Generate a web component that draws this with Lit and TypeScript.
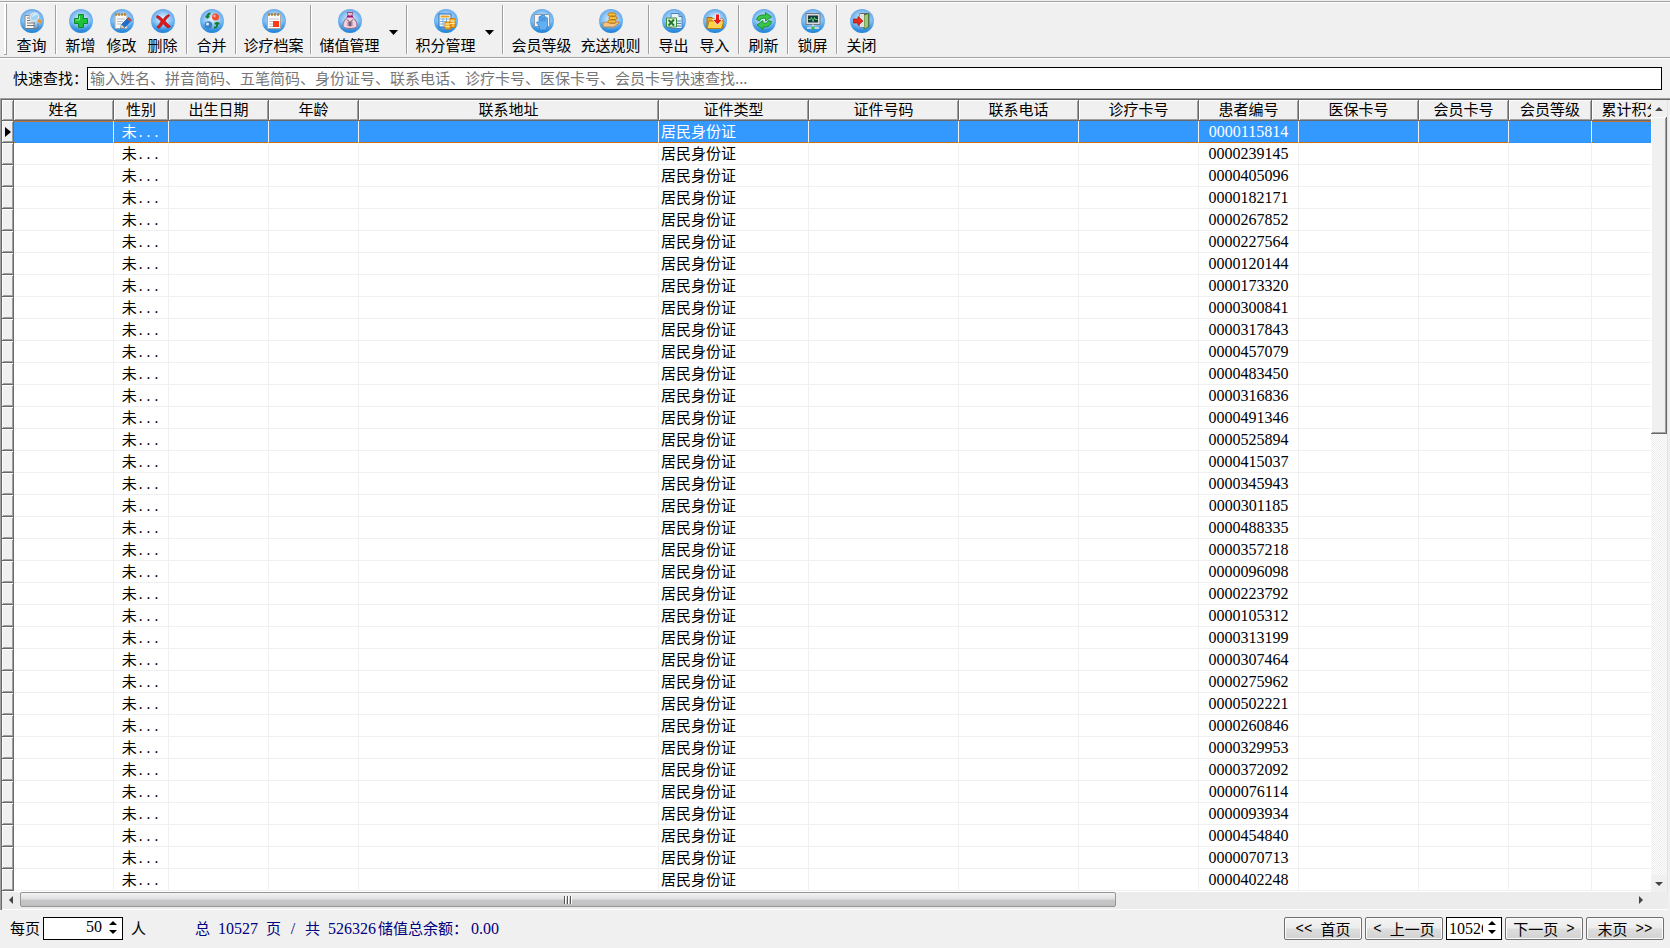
import { LitElement, html, css, svg } from "lit";
import { customElement, property, state } from "lit/decorators.js";

const icons: Record<string, unknown> = {
  query: svg`<path d="M5 6.500h9v13h-9z" fill="#f4f4f4" stroke="#8a8a8a"/><path d="M5.500 19.500h12.500v-5" stroke="#777" fill="none"/><path d="M7 9h4M7 11.500h3M7 14h8M7 16.500h8" stroke="#777"/><circle cx="14.500" cy="8" r="4.400" fill="#9fd4f7" stroke="#dfe9f2" stroke-width="1.600"/><circle cx="14.500" cy="8" r="5.200" fill="none" stroke="#7d9fc0" stroke-width=".5"/><path d="M12.500 7.500q1-2.500 3.500-2" stroke="#fff" fill="none"/><path d="M18 11l3.500 2.500" stroke="#e39a2c" stroke-width="2.800"/>`,
  add: svg`<path d="M9.500 5.500h5v4h4v5h-4v4h-5v-4h-4v-5h4z" fill="#1fc03a" stroke="#0c8a2a"/><path d="M10.500 7v4h-4" stroke="#7ff090" fill="none"/>`,
  edit: svg`<path d="M5 5.500h12v14H5z" fill="#fafafa" stroke="#a8a8a8"/><path d="M6 4v3M9 4v3M12 4v3M15 4v3" stroke="#b5802a" stroke-width="1.500"/><path d="M7 10h8M7 12.500h6M7 15h4" stroke="#b8bcc4"/><path d="M18.500 8.500l3 2.500-7 7.500-4 1 1-4z" fill="#1d6fd0" stroke="#0f4a96" stroke-width=".7"/><path d="M11.500 15.500l3 3-4 1z" fill="#f5cf9a"/><path d="M18.500 8.500l3 2.500-1.500 1.500-3-2.500z" fill="#e04a2a"/>`,
  remove: svg`<path d="M6 6.500q3 .5 6 4 2.500-4 6-5l.5 1.500q-2.500 1.500-4.500 5 2 2.500 5.500 5.500l-2.500 1.500q-3-2-5-4.500-1.500 3-4 5l-2-1.500q2.500-2.500 4-5.500-2-3-4.500-4z" fill="#e01818" stroke="#a80f1e" stroke-width=".7"/>`,
  merge: svg`<circle cx="15.500" cy="8" r="3.500" fill="#f2502e"/><circle cx="14.500" cy="7" r="1.200" fill="#ffb09c"/><circle cx="8.500" cy="16" r="3.800" fill="#3f7fc4"/><circle cx="7.500" cy="15" r="1.500" fill="#d8ecff"/><path d="M10.500 4.500q-3 0-3 3v2M5.500 7.500h4M14 18.500q3 .5 3-2.500v-3M14.500 14.500h5" fill="none" stroke="#0e7a2c" stroke-width="1.800"/>`,
  record: svg`<path d="M5.500 5.500h13v14h-13z" fill="#fdfdfd" stroke="#b0a8a0"/><path d="M7 4v3M10 4v3M13 4v3M16 4v3" stroke="#a87c34" stroke-width="1.500"/><path d="M7 10h10M7 12.500h4M7 15h4M7 17.500h4" stroke="#c4c4cc"/><path d="M11 12h6v6h-6z" fill="#ff3a12"/>`,
  bag: svg`<path d="M9 3.500l6 0-1.500 3.500q6 5 5.500 10.500-.5 2-7 2t-7-2q-.5-5.500 5.500-10.500z" fill="#f0cfe0" stroke="#8f6b82"/><path d="M9 4l2-1 1.500 1 2-1" stroke="#b04080" fill="none"/><path d="M9 7.500h6" stroke="#a01470" stroke-width="2"/><path d="M9 10.500l3 3 3-3M12 13.500v4M9.500 14h5M9.500 16h5" stroke="#5a3a55" fill="none"/>`,
  points: svg`<path d="M5 5h12v13H5z" fill="#fff" stroke="#1a68b8"/><path d="M6.500 7.500h9" stroke="#f0a020" stroke-width="2"/><path d="M6 10h10M6 12.500h6M6 15h6M9 9v8M12.500 9v4" stroke="#7ab0dc"/><path d="M11 13h6v7h-6zM16 9.500h5v9h-5z" fill="#f7b733" stroke="#c97a10"/><path d="M11 15h5M11 17.500h5M16 12h5M16 14.500h5" stroke="#ffe79a"/>`,
  hand: svg`<path d="M4.500 5.500h15v12h-15z" fill="#f2f6fa" stroke="#909aa6"/><path d="M9.500 21v-3L6.500 13.500q.5-1.500 2.500 0V8q1-1.500 2 0V6.500q1-1.500 2 0V7q1.200-1.500 2 0v2q1.200-1.500 2.500 0v8l-1.500 4z" fill="#62b0f2" stroke="#2f86d8" stroke-width=".8"/><path d="M11 8v4.500M13 8v4.500M15 8.500v4" stroke="#2676c8" stroke-width=".7"/>`,
  coins: svg`<path d="M4 14q4-2 7 0l3 .5q2 0 5-2 1.500 0 1 1.500l-5 4H4z" fill="#f3c48a" stroke="#b87830" stroke-width=".8"/><rect x="9" y="4" width="8" height="3" rx="1.500" fill="#f8bf3c" stroke="#b77a16"/><rect x="10" y="7.500" width="8" height="3" rx="1.500" fill="#f8bf3c" stroke="#b77a16"/><rect x="9" y="11" width="8" height="3" rx="1.500" fill="#f8bf3c" stroke="#b77a16"/>`,
  excel: svg`<path d="M9 4.500h8l3 3v12H9z" fill="#e8f2fb" stroke="#4a80b8"/><path d="M17 4.500v3h3M15 12h4M15 14.500h4M15 17h4" stroke="#4a80b8" fill="none"/><path d="M4.500 9h10v9h-10z" fill="#e6f4dd" stroke="#3f8a3c"/><path d="M6.500 11l5.500 5.500M12 10.500l-5.500 6" stroke="#1f7a2c" stroke-width="2"/>`,
  import: svg`<path d="M4 8.500h5l1.500 1.500H20v9H4z" fill="#e8a21c" stroke="#a86c0c"/><path d="M6 12h15l-2.500 7.500H4z" fill="#fcd24c" stroke="#b87f10"/><path d="M12.500 5h4v5.500h3l-5 5.500-5-5.500h3z" fill="#e81818" stroke="#fff" stroke-width=".8"/>`,
  refresh: svg`<path d="M4.500 10.500Q6 5 13.500 6V3.500L19.500 8l-6 4V9.500Q9 8.500 7.500 12z" fill="#39c545" stroke="#0f8526" stroke-width=".8"/><path d="M19.500 12.500Q18.500 18.500 11 18v2.500L5 16l6-4.500V14q4 1 5.500-2.500z" fill="#39c545" stroke="#0f8526" stroke-width=".8"/>`,
  lock: svg`<path d="M5 4.500h14v11H5z" fill="#d8dcde" stroke="#75797d"/><path d="M7 6.500h10v7H7z" fill="#173c40"/><path d="M7.500 10.500h2l1-2 1.500 4 1.500-4 1 2h2" stroke="#5fe07a" fill="none" stroke-width=".9"/><path d="M12 15.500v3M6 19h12" stroke="#e0e8ee" stroke-width="1.500"/><path d="M10.500 17.500h3v3h-3z" fill="#2db84a"/>`,
  close: svg`<path d="M10 4.500h9v13.500h-9z" fill="#444" stroke="#666"/><path d="M14 6l4.500-1.500v13.500L14 20z" fill="#9fc878" stroke="#476d38" stroke-width=".8"/><path d="M10 5h4v13h-4z" fill="#e2e2e2"/><path d="M3.500 10h4.500V7.500l5 4.500-5 4.500V14H3.500z" fill="#e82a1c" stroke="#9c1210" stroke-width=".7"/>`,
};

interface Tool { id: string; label: string; size?: "wide" | "mid"; menu?: boolean }

const groups: Tool[][] = [
  [{ id: "query", label: "查询" }],
  [{ id: "add", label: "新增" }, { id: "edit", label: "修改" }, { id: "remove", label: "删除" }],
  [{ id: "merge", label: "合并" }],
  [{ id: "record", label: "诊疗档案", size: "mid" }],
  [{ id: "bag", label: "储值管理", size: "wide", menu: true }],
  [{ id: "points", label: "积分管理", size: "wide", menu: true }],
  [{ id: "hand", label: "会员等级", size: "wide" }, { id: "coins", label: "充送规则", size: "wide" }],
  [{ id: "excel", label: "导出" }, { id: "import", label: "导入" }],
  [{ id: "refresh", label: "刷新" }],
  [{ id: "lock", label: "锁屏" }],
  [{ id: "close", label: "关闭" }],
];

const columns: [string, number][] = [
  ["姓名", 100], ["性别", 55], ["出生日期", 100], ["年龄", 90], ["联系地址", 300],
  ["证件类型", 150], ["证件号码", 150], ["联系电话", 120], ["诊疗卡号", 120],
  ["患者编号", 100], ["医保卡号", 120], ["会员卡号", 90], ["会员等级", 83], ["累计积分", 80],
];

const patientNumbers = [
  "0000115814", "0000239145", "0000405096", "0000182171", "0000267852", "0000227564", "0000120144",
  "0000173320", "0000300841", "0000317843", "0000457079", "0000483450", "0000316836", "0000491346",
  "0000525894", "0000415037", "0000345943", "0000301185", "0000488335", "0000357218", "0000096098",
  "0000223792", "0000105312", "0000313199", "0000307464", "0000275962", "0000502221", "0000260846",
  "0000329953", "0000372092", "0000076114", "0000093934", "0000454840", "0000070713", "0000402248",
];

const base = css`
  * { box-sizing: border-box; }
  button, input { font: inherit; color: inherit; margin: 0; }
  button { padding: 0; border: 0; background: none; }
`;

@customElement("tool-button")
class ToolButton extends LitElement {
  @property() icon = "";
  @property() label = "";
  @property() size = "";
  @property({ type: Boolean }) menu = false;

  static styles = [base, css`
    :host { display: flex; }
    .tool { width: 41px; display: flex; flex-direction: column; align-items: center; gap: 2px; white-space: nowrap; line-height: 20px; }
    .mid { width: 67px; }
    .wide { width: 69px; }
    .tool:hover, .drop:hover { background: #e2eefb; }
    .icon { width: 24px; height: 24px; display: block; }
    .drop { width: 19px; display: grid; place-items: center; }
  `];

  render() {
    return html`
      <button class="tool ${this.size}">
        <svg class="icon" viewBox="0 0 24 24" aria-hidden="true">
          <defs><linearGradient id="disc" x1="0" y1="0" x2="0" y2="1">
            <stop offset="0" stop-color="#5aa2ea"/><stop offset=".5" stop-color="#74b8f2"/><stop offset="1" stop-color="#1f82d8"/>
          </linearGradient>
          <radialGradient id="glow" cy=".42" r=".45"><stop offset="0" stop-color="#e4f4ff"/><stop offset="1" stop-color="#e4f4ff" stop-opacity="0"/></radialGradient></defs>
          <circle cx="12" cy="12" r="12" fill="url(#disc)"/>
          <circle cx="12" cy="12" r="12" fill="url(#glow)"/>
          ${icons[this.icon]}
        </svg>
        <span>${this.label}</span>
      </button>
      ${this.menu ? html`<button class="drop" aria-label="${this.label}菜单">
        <svg width="9" height="5" viewBox="0 0 9 5"><path d="M0 0h9L4.500 5z"/></svg></button>` : ""}
    `;
  }
}

@customElement("spin-box")
class SpinBox extends LitElement {
  @property() value = "";
  @property() label = "";
  @property({ type: Boolean }) narrow = false;

  static styles = [base, css`
    :host { display: block; }
    .box { display: flex; width: 80px; height: 23px; border: 1px solid #000; background: #fff; }
    .box.narrow { width: 56px; }
    .field { flex: 1; min-width: 0; border: 0; outline: 0; padding: 0 2px 2px 0; text-align: right; background: none; font: 16px "Liberation Serif", serif; }
    .narrow .field { text-align: left; padding: 0 0 0 2px; }
    .arrows { display: flex; flex-direction: column; justify-content: center; gap: 5px; width: 18px; padding-bottom: 2px; align-items: center; }
    .arrow { display: flex; line-height: 0; }
  `];

  step(by: number) { this.value = String(Math.max(1, Number(this.value) + by)); }

  render() {
    return html`<div class="box ${this.narrow ? "narrow" : ""}">
      <input class="field" aria-label=${this.label} inputmode="numeric" .value=${this.value}>
      <span class="arrows">
        <button class="arrow" aria-label="增加" @click=${() => this.step(1)}><svg width="8" height="4" viewBox="0 0 8 4"><path d="M0 4h8L4 0z"/></svg></button>
        <button class="arrow" aria-label="减少" @click=${() => this.step(-1)}><svg width="8" height="4" viewBox="0 0 8 4"><path d="M0 0h8L4 4z"/></svg></button>
      </span>
    </div>`;
  }
}

@customElement("app-root")
class AppRoot extends LitElement {
  @state() private selected = 0;

  static styles = [base, css`
    :host {
      display: flex; flex-direction: column; min-height: 100vh; background: #f0f0f0; color: #000;
      font: 15px/20px "Noto Sans CJK SC", sans-serif; overflow: hidden;
    }
    .toolbar { display: flex; border-top: 1px solid #a0a0a0; border-bottom: 1px solid #a0a0a0; box-shadow: inset 0 1px #fff, 0 1px #fff; margin-top: 1px; padding: 2px 0 2px 4px; height: 57px; }
    .grip { width: 3px; margin-right: 4px; border: solid #a0a0a0; border-width: 0 1px 1px 0; background: #fff; }
    .group { display: flex; padding: 5px 0 0; }
    .sep { width: 2px; margin: 1px 3px; background: linear-gradient(90deg, #a0a0a0 50%, #fff 50%); }
    .search { display: flex; align-items: center; padding: 9px 8px 8px 13px; }
    .search-label { width: 74px; white-space: nowrap; padding-bottom: 2px; }
    .search-input { flex: 1; min-width: 0; height: 23px; border: 1px solid #000; background: #fff; padding: 0 2px 3px; outline: 0; }
    .search-input::placeholder { color: #777; opacity: 1; }

    .grid { flex: 1; display: flex; flex-direction: column; border: solid #a0a0a0; border-width: 1px 0 0 1px; box-shadow: inset 1px 1px #696969; padding: 1px 2px 0 1px; }
    .body { flex: 1; display: flex; min-height: 0; }
    .viewport { flex: 1; min-width: 0; overflow: hidden; background: #fff; }
    .table { table-layout: fixed; border-collapse: separate; border-spacing: 0; width: 1670px; min-width: 100%; }
    .corner-col { width: 12px; }
    .table th { height: 21px; padding: 0; font-weight: normal; line-height: 18px; vertical-align: top; background: #f0f0f0; border: solid #696969; border-width: 0 1px 1px 0; box-shadow: inset 1px 1px #fff, inset -1px -1px #a0a0a0; white-space: nowrap; }
    .table td { height: 22px; padding: 0 2px; line-height: 19px; vertical-align: top; border: solid #f0f0f0; border-width: 0 1px 1px 0; white-space: nowrap; overflow: hidden; }
    .table .mark { height: 22px; vertical-align: middle; }
    .table td.sex, .table td.num { text-align: center; }
    .num { font: 16px/21px "Liberation Serif", serif; }
    .table td.num { line-height: 21px; }
    .dots { font: 13px/16px "Liberation Mono", monospace; }
    .selected td { background: #3399ff; color: #fff; border-bottom: 1px dotted #cc6600; background-image: repeating-linear-gradient(90deg, #c07030 0 1px, #3399ff 1px 2px); background-size: 100% 1px; background-repeat: no-repeat; }
    .pointer { display: block; margin: 0 0 0 3px; }

    .vscroll { width: 17px; display: flex; flex-direction: column; border-right: 1px solid #e3e3e3; background: repeating-conic-gradient(#ececec 0 25%, #fff 0 50%) 0 0 / 2px 2px; }
    .vbutton { height: 17px; background: #f0f0f0; display: grid; place-items: center; }
    .vthumb { height: 40%; background: #f0f0f0; border: solid #696969; border-width: 0 1px 1px 0; box-shadow: inset 1px 1px #fff, inset -1px -1px #a0a0a0; }
    .vspace { flex: 1; }
    .hscroll { height: 18px; padding: 0 18px 2px 0; display: flex; background: #ececec; border-bottom: 1px solid #fff; }
    .hbutton { width: 18px; display: grid; place-items: center; }
    .htrack { flex: 1; display: flex; }
    .hthumb { width: 68%; border: 1px solid #969696; border-radius: 2px; background: linear-gradient(#f2f2f2, #e0e0e0 48%, #c8c8ca 52%, #c0c0c4); display: grid; place-items: center; }

    .pager { display: flex; align-items: center; padding: 6px 6px 8px 10px; height: 38px; white-space: nowrap; }
    .per { width: 33px; }
    .unit { margin: 0 49px 0 8px; }
    .stats { display: flex; gap: 8px; color: #000080; }
    .slash { width: 8px; text-align: center; }
    .total { display: flex; margin-left: -6px; gap: 3px; }
    .spacer { flex: 1; }
    .nav { display: flex; gap: 3px; padding-top: 1px; }
    .page { width: 78px; height: 23px; display: flex; align-items: center; justify-content: center; gap: 8px; border: 1px solid #707070; border-radius: 2px; background: linear-gradient(#f4f4f4, #ececec 48%, #dedede 52%, #d2d2d2); box-shadow: inset 0 0 0 1px #fbfbfb; }
    .chev { font: 14px/18px "Liberation Mono", monospace; }
  `];

  render() {
    return html`
      <nav class="toolbar" aria-label="工具栏">
        <span class="grip"></span>
        ${groups.map((g, i) => html`
          ${i ? html`<span class="sep"></span>` : ""}
          <div class="group">${g.map(t => html`<tool-button icon=${t.id} label=${t.label} size=${t.size ?? ""} ?menu=${t.menu}></tool-button>`)}</div>`)}
      </nav>
      <div class="search">
        <label class="search-label" for="quick">快速查找：</label>
        <input class="search-input" id="quick" placeholder="输入姓名、拼音简码、五笔简码、身份证号、联系电话、诊疗卡号、医保卡号、会员卡号快速查找...">
      </div>
      <div class="grid">
        <div class="body">
          <div class="viewport">
            <table class="table">
              <colgroup><col class="corner-col">${columns.map(([, w]) => html`<col width=${w}>`)}</colgroup>
              <thead><tr><th></th>${columns.map(([name]) => html`<th scope="col">${name}</th>`)}</tr></thead>
              <tbody>${patientNumbers.map((no, i) => html`
                <tr class=${i === this.selected ? "selected" : ""} @click=${() => (this.selected = i)}>
                  <th class="mark">${i === this.selected ? html`<svg class="pointer" width="6" height="10" viewBox="0 0 6 10"><path d="M0 0l6 5-6 5z"/></svg>` : ""}</th>
                  <td></td><td class="sex">未<span class="dots">...</span></td><td></td><td></td><td></td>
                  <td>居民身份证</td><td></td><td></td><td></td>
                  <td class="num">${no}</td><td></td><td></td><td></td><td></td>
                </tr>`)}</tbody>
            </table>
          </div>
          <div class="vscroll">
            <button class="vbutton" aria-label="向上滚动"><svg width="8" height="4" viewBox="0 0 8 4"><path d="M0 4h8L4 0z" fill="#444"/></svg></button>
            <div class="vthumb"></div><div class="vspace"></div>
            <button class="vbutton" aria-label="向下滚动"><svg width="8" height="4" viewBox="0 0 8 4"><path d="M0 0h8L4 4z" fill="#444"/></svg></button>
          </div>
        </div>
        <div class="hscroll">
          <button class="hbutton" aria-label="向左滚动"><svg width="4" height="8" viewBox="0 0 4 8"><path d="M4 0v8L0 4z" fill="#444"/></svg></button>
          <div class="htrack"><div class="hthumb"><svg width="9" height="8" viewBox="0 0 9 8"><path d="M.5 0v8M3.500 0v8M6.500 0v8" stroke="#555"/><path d="M1.500 0v8M4.500 0v8M7.500 0v8" stroke="#fff"/></svg></div></div>
          <button class="hbutton" aria-label="向右滚动"><svg width="4" height="8" viewBox="0 0 4 8"><path d="M0 0v8l4-4z" fill="#444"/></svg></button>
        </div>
      </div>
      <footer class="pager">
        <span class="per">每页</span>
        <spin-box value="50" label="每页人数"></spin-box>
        <span class="unit">人</span>
        <div class="stats">
          <span>总</span><span class="num">10527</span><span>页</span><span class="num slash">/</span><span>共</span><span class="num">526326</span>
          <span class="total"><span>储值总余额：</span><span class="num">0.00</span></span>
        </div>
        <span class="spacer"></span>
        <div class="nav">
          <button class="page"><span class="chev">&lt;&lt;</span>首页</button>
          <button class="page"><span class="chev">&lt;</span>上一页</button>
          <spin-box narrow value="10526" label="页码"></spin-box>
          <button class="page">下一页<span class="chev">&gt;</span></button>
          <button class="page">末页<span class="chev">&gt;&gt;</span></button>
        </div>
      </footer>
    `;
  }
}
